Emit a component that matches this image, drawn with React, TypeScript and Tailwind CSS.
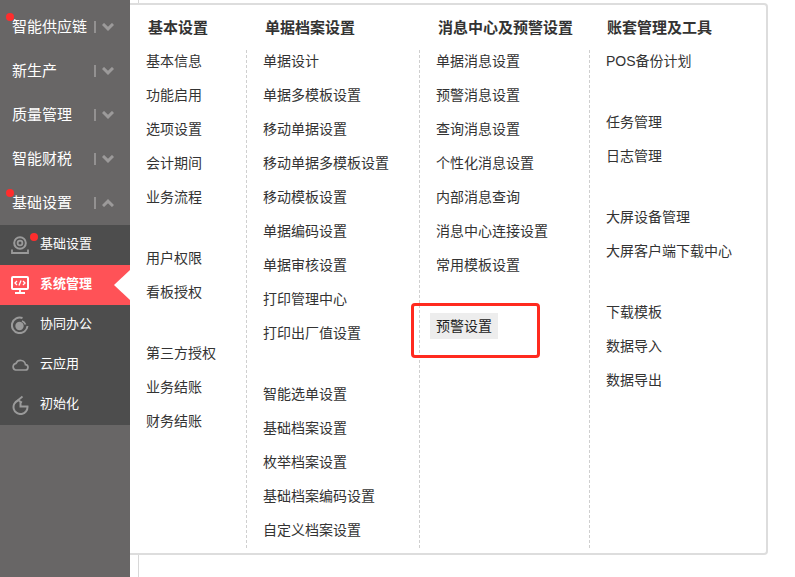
import React from "react";

type Group = string[];
type Col = { title: string; titleX: string; itemX: string; width: string; line: boolean; groups: Group[] };

function Items({ groups }: { groups: Group[] }) {
  return (
    <div className="flex flex-col gap-[27px] -mt-[6px]">
      {groups.map((g, i) => (
        <ul key={i} className="flex flex-col">
          {g.map((t) => (
            <li key={t} className="h-[34px] leading-[34px] text-[14px] text-[#333] whitespace-nowrap">
              {t}
            </li>
          ))}
        </ul>
      ))}
    </div>
  );
}

function Chevron({ up }: { up?: boolean }) {
  return (
    <svg width="12" height="8" viewBox="0 0 12 8" className="ml-[6px]">
      <path d={up ? "M1 7 L6 2.200 L11 7" : "M1 1 L6 5.800 L11 1"} fill="none" stroke="#9c9a9a" strokeWidth="3" />
    </svg>
  );
}

function TopItem({ label, up, dot }: { label: string; up?: boolean; dot?: boolean }) {
  return (
    <div className="relative h-[44px] flex items-center pl-[12px] text-[15px] text-white">
      {dot && <span className="absolute left-[6px] top-[8px] w-[8px] h-[8px] rounded-full bg-[#ff2d2d]" />}
      <span className="w-[82px] whitespace-nowrap">{label}</span>
      <span className="w-[2px] h-[12px] bg-[#939191]" />
      <Chevron up={up} />
    </div>
  );
}

function Cam() {
  return (
    <svg width="18" height="18" viewBox="0 0 18 18" fill="none" stroke="#9a9a9a">
      <circle cx="9" cy="7" r="5.800" strokeWidth="2" />
      <circle cx="9" cy="7" r="2.400" strokeWidth="1.800" />
      <path d="M1 13.500v3.500h16v-3.500" strokeWidth="1.800" />
    </svg>
  );
}
function Monitor() {
  return (
    <svg width="18" height="18" viewBox="0 0 18 18" fill="none" stroke="#fff">
      <rect x="1" y="1" width="16" height="12" rx="1" strokeWidth="2" />
      <path d="M9 13v3.500M4 17h10" strokeWidth="1.800" />
      <path d="M6 5L4 7l2 2M12 5l2 2-2 2M10 4.500L8 9.500" strokeWidth="1.300" />
    </svg>
  );
}
function Swirl() {
  return (
    <svg width="18" height="18" viewBox="0 0 18 18" fill="none" stroke="#9a9a9a">
      <circle cx="8.500" cy="10" r="4.200" fill="#9a9a9a" stroke="none" />
      <path d="M11.500 2A7.800 7.800 0 1 0 16.500 10" strokeWidth="2" />
      <path d="M11 5a6 6 0 0 1 3.500 3.500" strokeWidth="1.800" />
    </svg>
  );
}
function Cloud() {
  return (
    <svg width="18" height="12" viewBox="0 0 18 12" fill="none" stroke="#9a9a9a" strokeWidth="1.700">
      <path d="M4.500 11H14a2.700 2.700 0 0 0 .5-5.400A5 5 0 0 0 5 4.400 3.400 3.400 0 0 0 4.500 11Z" />
    </svg>
  );
}
function Refresh() {
  return (
    <svg width="18" height="20" viewBox="0 0 18 20" fill="none" stroke="#9a9a9a">
      <path d="M7 5.500A7 7 0 1 0 16.500 11.500H9.500V7" strokeWidth="2" />
      <path d="M11.500 1.500 7 5.200l4 2.300" strokeWidth="1.800" />
    </svg>
  );
}

function SubItem({ icon, label, active, dot }: { icon: React.ReactNode; label: string; active?: boolean; dot?: boolean }) {
  return (
    <div className={`relative h-[40px] flex items-center text-[13px] text-white ${active ? "bg-[#ff5257] font-bold" : ""}`}>
      <span className="w-[40px] flex justify-center pl-[2px] pr-[2px]">{icon}</span>
      <span className="whitespace-nowrap mb-[2px]">{label}</span>
      {dot && <span className="absolute left-[30px] top-[8px] w-[8px] h-[8px] rounded-full bg-[#ff2d2d]" />}
      {active && (
        <svg width="16" height="30" viewBox="0 0 16 30" className="absolute right-0 top-[5px]">
          <polygon points="16,0 0,15 16,30" fill="#fff" />
        </svg>
      )}
    </div>
  );
}

const cols: Col[] = [
  { title: "基本设置", titleX: "pl-[18px]", itemX: "pl-[16px]", width: "w-[116px]", line: false,
    groups: [["基本信息", "功能启用", "选项设置", "会计期间", "业务流程"], ["用户权限", "看板授权"], ["第三方授权", "业务结账", "财务结账"]] },
  { title: "单据档案设置", titleX: "pl-[19px]", itemX: "pl-[16px]", width: "w-[173px]", line: true,
    groups: [["单据设计", "单据多模板设置", "移动单据设置", "移动单据多模板设置", "移动模板设置", "单据编码设置", "单据审核设置", "打印管理中心", "打印出厂值设置"], ["智能选单设置", "基础档案设置", "枚举档案设置", "基础档案编码设置", "自定义档案设置"]] },
  { title: "消息中心及预警设置", titleX: "pl-[19px]", itemX: "pl-[16px]", width: "w-[170px]", line: true,
    groups: [["单据消息设置", "预警消息设置", "查询消息设置", "个性化消息设置", "内部消息查询", "消息中心连接设置", "常用模板设置"]] },
  { title: "账套管理及工具", titleX: "pl-[18px]", itemX: "pl-[16px]", width: "w-[170px]", line: true,
    groups: [["POS备份计划"], ["任务管理", "日志管理"], ["大屏设备管理", "大屏客户端下载中心"], ["下载模板", "数据导入", "数据导出"]] },
];

export default function App() {
  return (
    <div
      className="relative w-[795px] h-[577px] overflow-hidden bg-white flex"
      style={{ fontFamily: '"Liberation Sans", "Noto Sans CJK SC", sans-serif' }}
    >
      <span className="absolute left-[138px] top-0 w-[1px] h-full bg-[#d8d8d8]" />
      <aside className="relative z-10 w-[130px] h-full bg-[#686666] pt-[5px] shrink-0">
        <TopItem label="智能供应链" dot />
        <TopItem label="新生产" />
        <TopItem label="质量管理" />
        <TopItem label="智能财税" />
        <TopItem label="基础设置" up dot />
        <div className="bg-[#4d4d4d]">
          <SubItem icon={<Cam />} label="基础设置" dot />
          <SubItem icon={<Monitor />} label="系统管理" active />
          <SubItem icon={<Swirl />} label="协同办公" />
          <SubItem icon={<Cloud />} label="云应用" />
          <SubItem icon={<Refresh />} label="初始化" />
        </div>
      </aside>
      <main className="relative mt-[3px] w-[638px] h-[552px] bg-white border-2 border-l-0 border-[#dddddd] rounded-r-[4px] flex">
        {cols.map((c) => (
          <section key={c.title} className={`${c.width} shrink-0 flex flex-col`}>
            <h3 className={`${c.titleX} h-[45px] pt-[10px] leading-[26px] text-[15px] font-bold text-[#333] whitespace-nowrap`}>
              {c.title}
            </h3>
            <div className={`${c.itemX} ${c.line ? "border-l border-dashed border-[#cfcfcf]" : ""} h-[498px]`}>
              <Items groups={c.groups} />
              {c.title === "消息中心及预警设置" && (
                <div className="relative mt-[31px]">
                  <span className="inline-block h-[26px] leading-[26px] px-[6px] -ml-[6px] bg-[#ededed] text-[14px] text-[#222]">
                    预警设置
                  </span>
                </div>
              )}
            </div>
          </section>
        ))}
        <div className="absolute left-[281px] top-[298px] w-[129px] h-[55px] border-[3px] border-[#ff2a1f] rounded-[4px]" />
      </main>
    </div>
  );
}
